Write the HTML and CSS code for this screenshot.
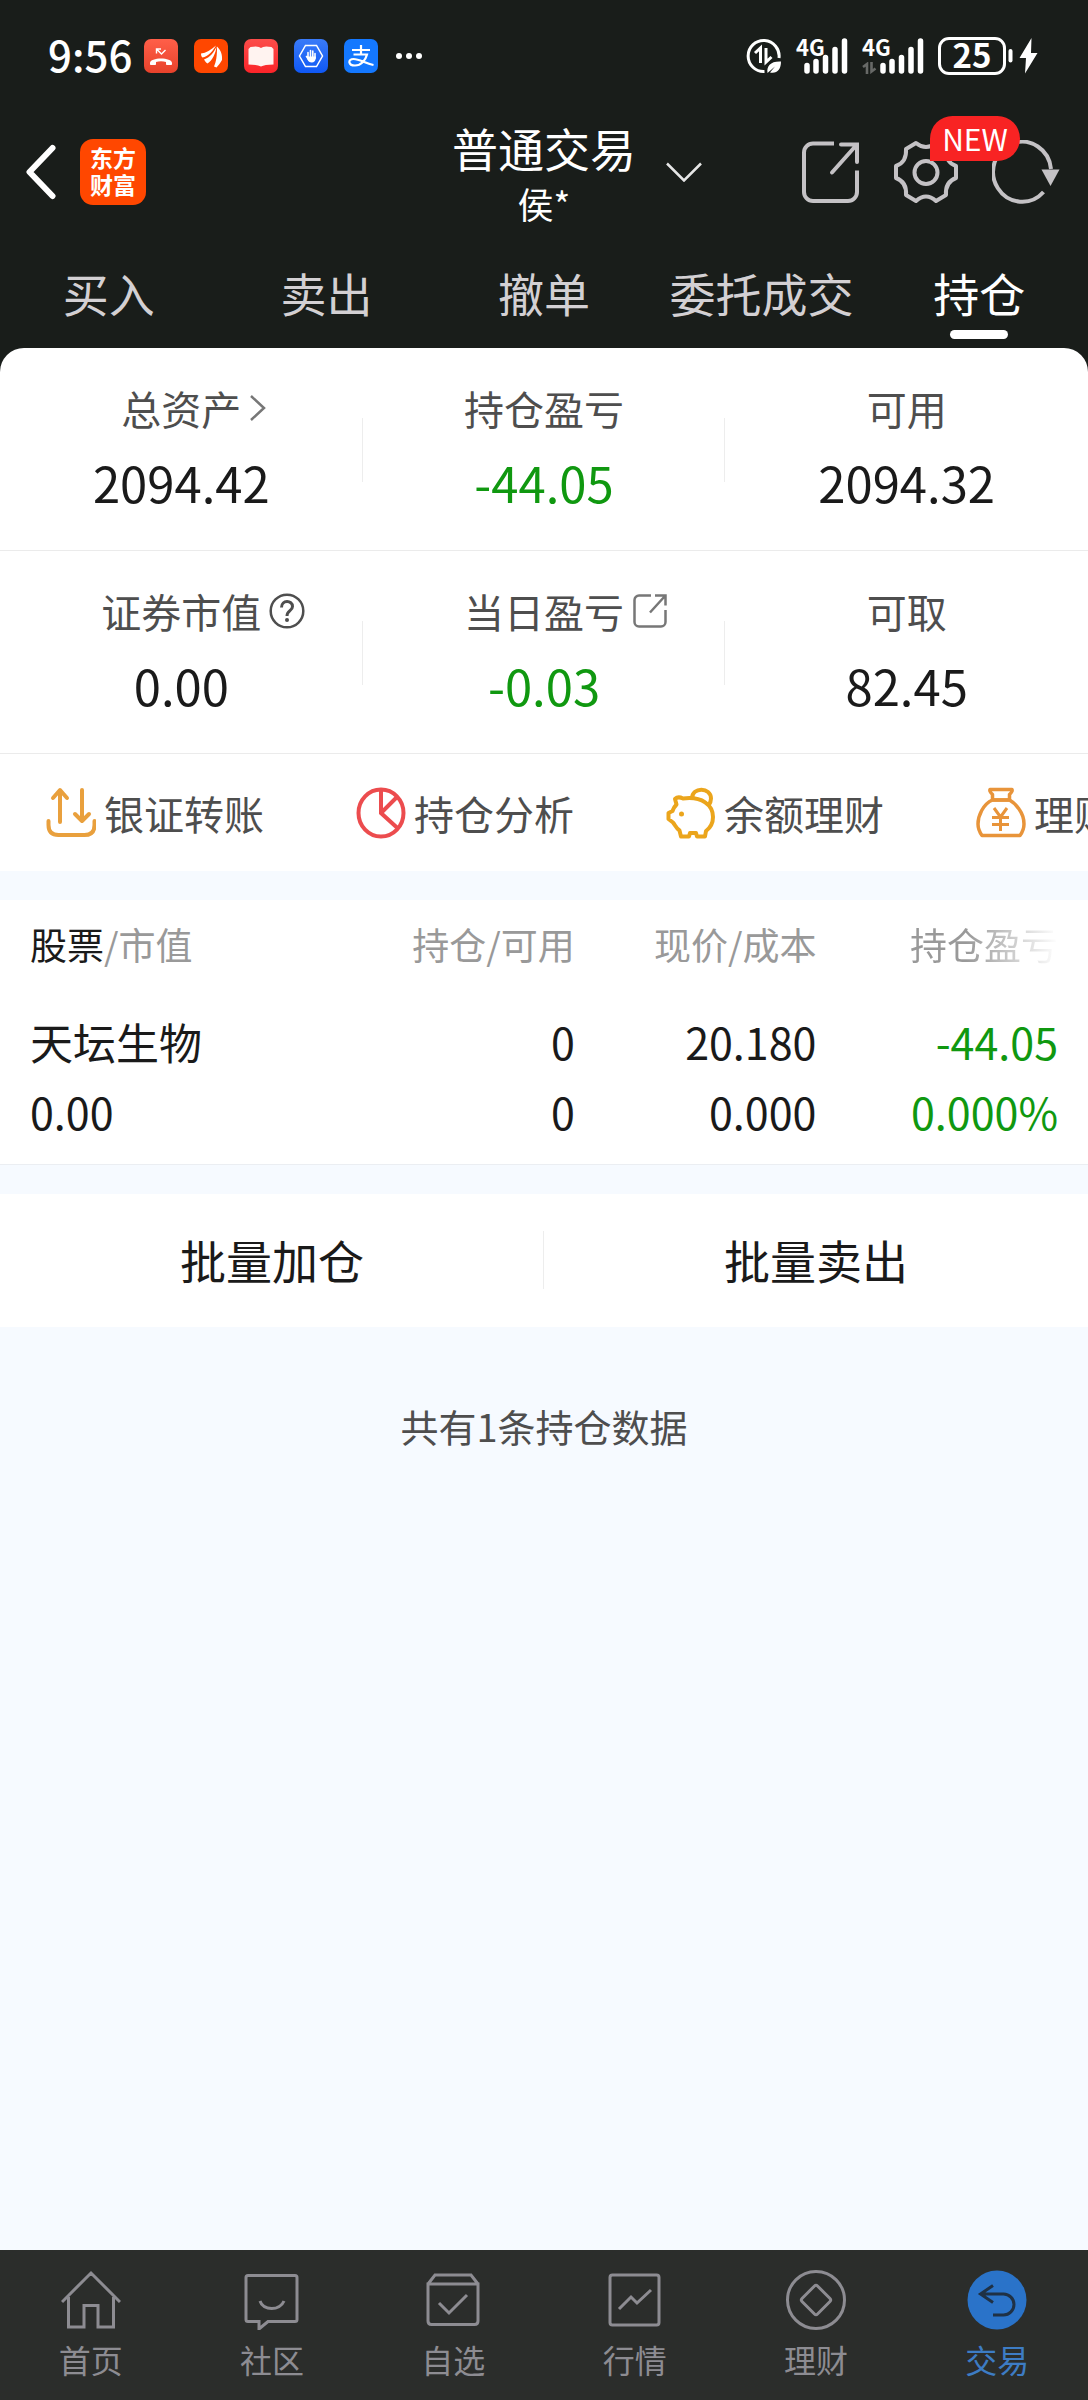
FILE: index.html
```html
<!DOCTYPE html>
<html lang="zh-CN">
<head>
<meta charset="utf-8">
<meta name="viewport" content="width=device-width, initial-scale=1">
<title>普通交易 - 持仓</title>
<link rel="stylesheet" href="styles.css">
</head>
<body>
<header class="top">
  <div class="status">
    <div class="status-left">
      <span class="clock">9:56</span>
      <svg class="app-icon" viewBox="0 0 34 34">
        <defs><linearGradient id="gCall" x1="0" y1="0" x2="0" y2="1"><stop offset="0" stop-color="#ff5f49"/><stop offset="1" stop-color="#e8422b"/></linearGradient></defs>
        <rect width="34" height="34" rx="7" fill="url(#gCall)"/>
        <path d="M6 24c0-6 22-6 22 0v1.500c0 .8-6 .8-6 0V23c-3-1-7-1-10 0v2.500c0 .8-6 .8-6 0z" fill="#fff"/>
        <path d="M12.500 14.500v-4.500h4.500M13 10.500l4.500 4.500 4-4" fill="none" stroke="#fff" stroke-width="1.400"/>
      </svg>
      <svg class="app-icon" viewBox="0 0 34 34">
        <rect width="34" height="34" rx="7" fill="#ff4700"/>
        <path d="M7 14.500C12 14 17 11 22 6.500 19 12 14 17.500 8.500 18.500 7.300 17.500 7 16 7 14.500z" fill="#fff"/>
        <path d="M10 20.500c6-2 10-7 12.500-13C22 14 18 22 13.500 24.500 12 23.500 10.800 22 10 20.500z" fill="#fff"/>
        <path d="M20 27.500c2-4 3.200-11 3-20C27 11 28.500 16 28 21c-1.500 3-3.500 5-5.500 7.500z" fill="#fff"/>
      </svg>
      <svg class="app-icon" viewBox="0 0 34 34">
        <defs><linearGradient id="gBook" x1="0" y1="0" x2="0" y2="1"><stop offset="0" stop-color="#fb4d4a"/><stop offset="1" stop-color="#fb2429"/></linearGradient></defs>
        <rect width="34" height="34" rx="7" fill="url(#gBook)"/>
        <path d="M6.500 8q8-1.500 10.500 1Q19.500 6.500 27.500 8l2 2v15.500q-9 0-12.500 2-3.500-2-12.500-2V10z" fill="#fff3f0"/>
      </svg>
      <svg class="app-icon" viewBox="0 0 34 34">
        <defs><linearGradient id="gHand" x1="0" y1="0" x2="0" y2="1"><stop offset="0" stop-color="#3a7bf8"/><stop offset="1" stop-color="#0f58f5"/></linearGradient></defs>
        <rect width="34" height="34" rx="7" fill="url(#gHand)"/>
        <path d="M11.500 6.500h11L28.500 17l-6 10.500h-11L5.500 17z" fill="none" stroke="#fff" stroke-width="1.500"/>
        <path d="M14 19v-5.500M16.500 18v-6.500M18.800 18v-6M21 19v-4.500M12.500 17.500l2.500 3.500" stroke="#fff" stroke-width="1.600" stroke-linecap="round"/>
        <path d="M13.200 17.500h8.600v2q-.8 4-4 4t-4.600-3.500z" fill="#fff"/>
      </svg>
      <svg class="app-icon" viewBox="0 0 34 34">
        <rect width="34" height="34" rx="7" fill="#1478ff"/>
        <path d="M8 11h18M17 6v9M9.500 15.500h13.500c-1.500 6-6 11-12 11-7 0-7.500-6.500-1.500-6.500 6 0 12 4.500 20 6" fill="none" stroke="#fff" stroke-width="2.200"/>
      </svg>
      <svg class="more" viewBox="0 0 26 34"><g fill="#fff"><circle cx="3" cy="17" r="3"/><circle cx="13" cy="17" r="3"/><circle cx="23" cy="17" r="3"/></g></svg>
    </div>
    <div class="status-right">
      <svg class="data-saver" viewBox="0 0 36 36">
        <path d="M18.500 33.500A15.500 15.500 0 1 1 33 20" fill="none" stroke="#fff" stroke-width="3"/>
        <path d="M9 15l5.500-5v15M20 10v14l5.500-5" fill="none" stroke="#fff" stroke-width="3"/>
        <path d="M21.500 35c-1-7 3-12 13.500-11.500 0 8-4 12.500-11 11l5-6z" fill="#fff"/>
      </svg>
      <span class="signal"><span class="net">4G</span><svg class="bars" viewBox="0 0 44 36"><path d="M3 27.500v5.500M12 23.500v9.500M21.500 19.500v13.500M31 11.500v21.500M40.500 3v30" stroke="#fff" stroke-width="5.500" stroke-linecap="round"/></svg></span>
      <span class="signal second"><span class="net">4G</span><svg class="idle" viewBox="0 0 15 12"><path d="M1 5l4-3v10M9.500 0v9.500l4-3" fill="none" stroke="#676967" stroke-width="2.600"/></svg><svg class="bars" viewBox="0 0 44 36"><path d="M3 27.500v5.500M12 23.500v9.500M21.500 19.500v13.500M31 11.500v21.500M40.500 3v30" stroke="#fff" stroke-width="5.500" stroke-linecap="round"/></svg></span>
      <span class="battery">25</span>
      <svg class="bolt" viewBox="0 0 30 36"><path d="M2.500 13v9.500" stroke="#fff" stroke-width="4" stroke-linecap="round"/><path d="M23.500 0l-12 20h6.500l-1 15.500L29.500 15H23z" fill="#fff"/></svg>
    </div>
  </div>
  <div class="bar">
    <div class="bar-left">
      <button class="icon-button" aria-label="返回"><svg width="32" height="56" viewBox="0 0 32 56"><path d="M28.500 4L5.500 28l23 24" fill="none" stroke="#fff" stroke-width="6" stroke-linecap="round" stroke-linejoin="round"/></svg></button>
      <a class="logo" href="#">东方<br>财富</a>
    </div>
    <button class="account">
      <span class="account-name">普通交易</span>
      <span class="account-user">侯*</span>
      <svg class="account-arrow" viewBox="0 0 36 20"><path d="M1 1.500l17 17 17-17" fill="none" stroke="#e6e6e6" stroke-width="2.500"/></svg>
    </button>
    <div class="bar-right">
      <button class="icon-button" aria-label="分享"><svg width="58" height="64" viewBox="0 0 58 64"><g fill="none" stroke="#c4c2c5" stroke-width="4"><path d="M32 3.500H11a9 9 0 0 0-9 9V52a9 9 0 0 0 9 9h35a9 9 0 0 0 9-9V30.500"/><path d="M39 4.500h16v17.500M54.500 5L30 32.500" stroke-linecap="round"/></g></svg></button>
      <button class="icon-button settings" aria-label="设置"><svg width="64" height="64" viewBox="0 0 64 64"><g fill="none" stroke="#c4c2c5" stroke-width="4" stroke-linejoin="round"><path d="M12 9L22 3q10 8 20 0l10 6q-1 13 10 17v12q-11 4-10 17l-10 6q-10-9-20 0l-10-6q1-13-10-17V26Q13 22 12 9z"/><circle cx="32" cy="32.500" r="11.500"/></g></svg><span class="badge">NEW</span></button>
      <button class="icon-button" aria-label="刷新"><svg width="68" height="64" viewBox="0 0 68 64"><path d="M51.500 52A29 30 0 1 1 59 29" fill="none" stroke="#c4c2c5" stroke-width="4"/><path d="M49.500 29.500h18L58.500 46z" fill="#c4c2c5"/></svg></button>
    </div>
  </div>
  <nav class="tabs">
    <a href="#">买入</a><a href="#">卖出</a><a href="#">撤单</a><a href="#">委托成交</a><a href="#" class="active">持仓</a>
  </nav>
</header>
<main class="main">
  <section class="summary">
    <div class="stats">
      <div class="stat"><div class="label"><span>总资产</span><svg width="18" height="30" viewBox="0 0 18 30"><path d="M2 3l13 12L2 27" fill="none" stroke="#777" stroke-width="2.500"/></svg></div><div class="value">2094.42</div></div>
      <div class="stat"><div class="label"><span>持仓盈亏</span></div><div class="value down">-44.05</div></div>
      <div class="stat"><div class="label"><span>可用</span></div><div class="value">2094.32</div></div>
    </div>
    <div class="stats">
      <div class="stat"><div class="label"><span>证券市值</span><svg width="36" height="36" viewBox="0 0 36 36"><g fill="none" stroke="#4e4e4e" stroke-width="2.500"><circle cx="18" cy="18" r="16.300"/><path d="M12.500 14.500c0-8 11-7.500 11-1 0 4.500-5.500 4-5.500 9.500" stroke-width="3"/></g><circle cx="18" cy="27" r="2" fill="#4e4e4e"/></svg></div><div class="value">0.00</div></div>
      <div class="stat"><div class="label"><span>当日盈亏</span><svg width="36" height="36" viewBox="0 0 36 36"><g fill="none" stroke="#777" stroke-width="2.500"><path d="M19 2.500H7a4.500 4.500 0 0 0-4.500 4.500v22A4.500 4.500 0 0 0 7 33.500h22a4.500 4.500 0 0 0 4.500-4.500V17M23 2.500h10.500v10M33 3L18 19.500"/></g></svg></div><div class="value down">-0.03</div></div>
      <div class="stat"><div class="label"><span>可取</span></div><div class="value">82.45</div></div>
    </div>
    <div class="quick">
      <a href="#"><svg viewBox="0 0 50 52"><g fill="none" stroke="#e9a03d" stroke-width="4" stroke-linecap="round" stroke-linejoin="round"><path d="M14 35V4M7 11l7-8 7 8M36 3v30M29 27l7 7 7-7"/><path d="M2.500 34v4q0 10 10 10h26q10 0 10-10v-4"/></g></svg><span>银证转账</span></a>
      <a href="#"><svg viewBox="0 0 50 52"><g fill="none" stroke="#ec4c4e" stroke-width="4"><ellipse cx="25" cy="26" rx="22.500" ry="23.500"/><path d="M25 3v23l17 15.500M25 26l15.500-15.500"/></g></svg><span>持仓分析</span></a>
      <a href="#"><svg viewBox="0 0 50 52"><g fill="none" stroke="#eba51c" stroke-width="4" stroke-linejoin="round"><path d="M9 12c2-2 5-2 8-.5C36 9 47 18 47 30c0 7-3 11-7 14l-1 5.500h-8L30 46h-6l-1 3.500h-8l-1.500-6C10 41 9 38 7 35.500L2.500 32v-6l4-2c1-3 2-4.500 4-6.500z"/><path d="M26 11.500c0-12 19-11.500 19 0 0 3-1 5-2.500 7"/></g><circle cx="15.500" cy="27" r="2.500" fill="#eba51c"/></svg><span>余额理财</span></a>
      <a href="#"><svg viewBox="0 0 50 52"><g fill="none" stroke="#e8943a" stroke-width="3.500" stroke-linejoin="round"><path d="M14 2.500h22q1 1.500-2.500 5v5.500h-17V7.500q-3.500-3.500-2.500-5z"/><path d="M16.500 13C7 17 2 29 2 37q0 6 4 11.500h38q4-5.500 4-11.500 0-8-5-15-4-6-9.500-9z"/><path d="M18 21l6.500 9L31 21M16 30.500h17M16 37.500h17M24.500 30v14" stroke-width="3"/></g></svg><span>理财</span></a>
    </div>
  </section>
  <section class="panel holdings">
    <table>
      <thead><tr><th scope="col"><b>股票</b>/市值</th><th scope="col">持仓/可用</th><th scope="col">现价/成本</th><th scope="col" class="fade">持仓盈亏</th></tr></thead>
      <tbody><tr>
        <td><div>天坛生物</div><div>0.00</div></td>
        <td><div>0</div><div>0</div></td>
        <td><div>20.180</div><div>0.000</div></td>
        <td class="down"><div>-44.05</div><div>0.000%</div></td>
      </tr></tbody>
    </table>
  </section>
  <section class="panel batch"><button>批量加仓</button><button>批量卖出</button></section>
  <p class="note">共有1条持仓数据</p>
</main>
<nav class="bottom">
  <a href="#"><svg viewBox="0 0 60 60"><path d="M1 32L30 3l29 29M7.500 27v30H23V35.500h14V57h15.500V27"/></svg><span>首页</span></a>
  <a href="#"><svg viewBox="0 0 60 60"><path d="M6 5.500h47q2 0 2 2v42q0 2-2 2H26L17 59v-7.500H6q-2 0-2-2v-42q0-2 2-2z"/><path d="M18 31c3 10 20 10 24 0"/></svg><span>社区</span></a>
  <a href="#"><svg viewBox="0 0 60 60"><path d="M5 14v37q0 3.500 3.500 3.500h43q3.500 0 3.500-3.500V14zL12 5h36l7 9M16 33l10 10 18-18"/></svg><span>自选</span></a>
  <a href="#"><svg viewBox="0 0 60 60"><rect x="5" y="5" width="49" height="50" rx="2.500"/><path d="M14 39l12-12 6 6 14-13"/></svg><span>行情</span></a>
  <a href="#"><svg viewBox="0 0 60 60"><circle cx="30" cy="30" r="28.500"/><path d="M28.500 16q1.500-1.500 3 0L44 28.500q1.500 1.500 0 3L31.500 44q-1.500 1.500-3 0L16 31.500q-1.500-1.500 0-3z"/></svg><span>理财</span></a>
  <a href="#" class="active"><svg viewBox="0 0 60 60"><circle class="disc" cx="30" cy="30" r="29.500"/><path class="arrow" d="M26 15.500L13.500 24 26 32.500M14 24h22.500a10.500 10.500 0 0 1 0 21H26"/></svg><span>交易</span></a>
</nav>
</body>
</html>
```
FILE: styles.css
```css
* {
  box-sizing: border-box;
}

body {
  display: flex;
  flex-direction: column;
  min-height: 100vh;
  margin: 0;
  overflow-x: hidden;
  background: #f6faff;
  color: #1a1a1a;
  font-family: "Noto Sans CJK SC", sans-serif;
}

a {
  color: inherit;
  text-decoration: none;
}

button {
  padding: 0;
  border: 0;
  background: none;
  color: inherit;
  font: inherit;
}

svg {
  display: block;
  flex: none;
}

.top {
  background: #191d1a;
  color: #fff;
}

/* Status bar */
.status {
  display: flex;
  justify-content: space-between;
  align-items: center;
  height: 112px;
  padding: 0 50px 0 48px;
}

.status-left {
  display: flex;
  align-items: center;
  gap: 16px;
}

.clock {
  width: 80px;
  font-size: 42px;
  font-weight: 500;
  line-height: 48px;
  padding-bottom: 4px;
}

.app-icon {
  width: 34px;
  height: 34px;
}

.more {
  width: 26px;
  height: 34px;
  margin-left: 2px;
}

.status-right {
  display: flex;
  align-items: center;
  gap: 14px;
}

.data-saver {
  width: 36px;
  height: 36px;
}

.signal {
  position: relative;
  display: flex;
  justify-content: flex-end;
  width: 52px;
}

.second {
  width: 62px;
}

.net {
  position: absolute;
  left: 0;
  top: 0;
  font-size: 22px;
  font-weight: 700;
  line-height: 16px;
}

.idle {
  position: absolute;
  left: 0;
  bottom: 0;
  width: 15px;
  height: 12px;
}

.bars {
  width: 44px;
  height: 36px;
}

.battery {
  width: 68px;
  height: 38px;
  border: 3px solid #fff;
  border-radius: 11px;
  font-size: 33px;
  font-weight: 700;
  line-height: 28px;
  text-align: center;
}

.bolt {
  width: 30px;
  height: 36px;
  margin-left: -12px;
}

/* Title bar */
.bar {
  display: grid;
  grid-template-columns: 1fr auto 1fr;
  align-items: center;
  height: 120px;
}

.bar-left {
  display: flex;
  align-items: center;
  gap: 24px;
  padding-left: 24px;
}

.logo {
  width: 66px;
  height: 66px;
  padding-top: 5px;
  border-radius: 13px;
  background: #ff4700;
  font-size: 23px;
  font-weight: 700;
  line-height: 27px;
  text-align: center;
}

.account {
  display: grid;
  grid-template-columns: 36px auto 36px;
  align-items: center;
  column-gap: 30px;
}

.account-name {
  grid-column: 2;
  padding-top: 4px;
  font-size: 46px;
  line-height: 58px;
}

.account-user {
  grid-column: 2;
  font-size: 36px;
  line-height: 54px;
}

.account-arrow {
  grid-column: 3;
  grid-row: 1 / 3;
  width: 36px;
  height: 20px;
}

.bar-right {
  display: flex;
  justify-content: flex-end;
  align-items: center;
  gap: 34px;
  padding-right: 28px;
}

.settings {
  position: relative;
}

.badge {
  position: absolute;
  left: 36px;
  top: -24px;
  width: 90px;
  border-radius: 23px 23px 23px 0;
  background: #f82323;
  color: #fff;
  font-size: 30px;
  line-height: 45px;
}

.tabs {
  display: grid;
  grid-template-columns: repeat(5, 1fr);
  height: 116px;
  padding-top: 27px;
  color: #d3d0d3;
  font-size: 46px;
  line-height: 66px;
  text-align: center;
}

.tabs .active {
  color: #fff;
}

.tabs .active::after {
  content: "";
  display: block;
  width: 58px;
  height: 9px;
  margin: 5px auto 0;
  border-radius: 5px;
  background: #fff;
}

/* Account summary */
.main {
  flex: 1;
  background: linear-gradient(#191d1a 0 40px, #f6faff 40px);
}

.summary {
  border-radius: 24px 24px 0 0;
  background: #fff;
}

.stats {
  display: grid;
  grid-template-columns: repeat(3, 1fr);
  border-bottom: 1px solid #ebebeb;
}

.stat {
  padding: 32px 0 38px;
  text-align: center;
}

.stat:not(:last-child) {
  background: linear-gradient(#ededed, #ededed) no-repeat right 70px / 1px 64px;
}

.label {
  display: grid;
  grid-template-columns: 1fr auto 1fr;
  align-items: center;
  column-gap: 8px;
  margin-bottom: 16px;
  color: #4e4e4e;
  font-size: 40px;
  line-height: 56px;
}

.label span {
  grid-column: 2;
}

.value {
  font-size: 49px;
  line-height: 60px;
}

.down {
  color: #109810;
}

.quick {
  display: flex;
  gap: 92px;
  height: 117px;
  padding-left: 46px;
  overflow: hidden;
  color: #4e4e4e;
  font-size: 40px;
  line-height: 114px;
  white-space: nowrap;
}

.quick a {
  display: flex;
  flex: none;
  align-items: center;
  gap: 8px;
}

.quick svg {
  width: 50px;
  height: 52px;
}

.panel {
  margin-top: 29px;
  background: #fff;
}

/* Holdings table */
.holdings {
  padding: 18px 30px;
  border-bottom: 1px solid #ebeef2;
}

.holdings table {
  width: 100%;
  border-collapse: collapse;
  table-layout: fixed;
}

.holdings th {
  width: 23.5%;
  padding: 0 0 36px;
  color: #999;
  font-size: 37px;
  font-weight: 400;
  line-height: 52px;
  text-align: right;
  white-space: nowrap;
}

.holdings th:first-child {
  width: auto;
}

.holdings b {
  color: #1a1a1a;
  font-weight: 400;
}

.holdings .fade {
  background: linear-gradient(90deg, #999 62%, #fff 100%);
  background-clip: text;
  color: transparent;
}

.holdings td {
  padding: 0;
  font-size: 43px;
  line-height: 70px;
  text-align: right;
}

.holdings th:first-child,
.holdings td:first-child {
  text-align: left;
}

.batch {
  display: grid;
  grid-template-columns: 1fr 1fr;
}

.batch button {
  padding: 31px 0 34px;
  font-size: 46px;
  line-height: 68px;
}

.batch button:first-child {
  background: linear-gradient(#ededed, #ededed) no-repeat right 37px / 1px 58px;
}

.note {
  margin: 70px 0;
  color: #4e4e4e;
  font-size: 38px;
  line-height: 58px;
  text-align: center;
}

/* Bottom navigation */
.bottom {
  display: grid;
  grid-template-columns: repeat(6, 1fr);
  padding: 20px 0 21px;
  background: #2b2d2b;
  color: #8d8c92;
}

.bottom a {
  display: flex;
  flex-direction: column;
  align-items: center;
  gap: 9px;
  font-size: 32px;
  line-height: 40px;
}

.bottom svg {
  width: 60px;
  height: 60px;
  fill: none;
  stroke: currentColor;
  stroke-width: 3;
}

.bottom .active {
  color: #3d7cc4;
}

.bottom .disc {
  fill: #2a73c9;
  stroke: none;
}

.bottom .arrow {
  stroke: #1f3145;
}
```
